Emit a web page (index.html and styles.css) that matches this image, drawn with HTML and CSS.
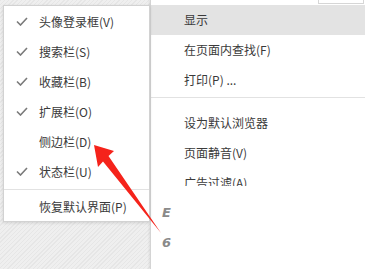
FILE: index.html
```html
<!DOCTYPE html>
<html>
	<head>
		<meta charset="UTF-8">
		<title></title>
		<link rel="stylesheet" href="styles.css">
	</head>
	<body>
		<div class="page">
			<div class="side">
				<ul class="submenu">
					<li class="on"><svg class="tick" viewBox="0 0 12 9"><polyline points="1,4.5 4.5,8 11,1"/></svg>头像登录框(V)</li>
					<li class="on"><svg class="tick" viewBox="0 0 12 9"><polyline points="1,4.5 4.5,8 11,1"/></svg>搜索栏(S)</li>
					<li class="on"><svg class="tick" viewBox="0 0 12 9"><polyline points="1,4.5 4.5,8 11,1"/></svg>收藏栏(B)</li>
					<li class="on"><svg class="tick" viewBox="0 0 12 9"><polyline points="1,4.5 4.5,8 11,1"/></svg>扩展栏(O)</li>
					<li><span class="blank"></span>侧边栏(D)</li>
					<li class="on"><svg class="tick" viewBox="0 0 12 9"><polyline points="1,4.5 4.5,8 11,1"/></svg>状态栏(U)</li>
					<li class="sep"></li>
					<li><span class="blank"></span>恢复默认界面(P)</li>
				</ul>
			</div>
			<div class="main">
				<div class="topbox"></div>
				<ul class="menu">
					<li class="hover">显示</li>
					<li>在页面内查找(F)</li>
					<li>打印(P) ...</li>
					<li class="sep"></li>
					<li>设为默认浏览器</li>
					<li>页面静音(V)</li>
					<li>广告过滤(A)</li>
				</ul>
				<div class="peek">
					<span>E</span>
					<span>6</span>
				</div>
			</div>
		</div>
		<!-- 标注箭头 -->
		<svg class="arrow" width="365" height="269" viewBox="0 0 365 269">
			<polygon points="94,145 114,151 108.5,156 161,233 103,161.5 98,167"/>
		</svg>
	</body>
</html>
```
FILE: styles.css
```css
body{
	margin: 0;
	font-family: "Microsoft YaHei", "Noto Sans CJK SC", sans-serif;
	font-size: 12px;
	color: #3a3a3a;
}
.page{
	display: flex;
	width: 365px;
	height: 269px;
	overflow: hidden;
	background-color: #ebebeb;
	background-image: repeating-linear-gradient(135deg, #e6e6e6 0px, #e6e6e6 1px, #efefef 1px, #efefef 3px);
}
.side{
	width: 150px;
	padding: 5px 0 0 3px;
	box-sizing: border-box;
	position: relative;
	z-index: 2;
}
.submenu{
	margin: 0;
	padding: 0;
	list-style: none;
	background: #fff;
	border: 1px solid #d2d2d2;
	box-shadow: 0 1px 3px rgba(0,0,0,0.12);
}
.submenu li{
	display: flex;
	align-items: center;
	height: 30px;
	padding-left: 12px;
	white-space: nowrap;
}
.submenu li.sep{
	height: 1px;
	padding: 0;
	margin: 3px 0 1px;
	background: #e2e2e2;
}
.tick{
	width: 12px;
	height: 9px;
	margin-right: 11px;
	fill: none;
	stroke: #7a7a7a;
	stroke-width: 1.6;
}
.blank{
	width: 12px;
	margin-right: 11px;
}
.main{
	flex: 1;
	background: #fff;
	border-left: 1px solid #d4d4d4;
	box-shadow: -1px 0 2px rgba(0,0,0,0.08);
	position: relative;
}
.topbox{
	position: absolute;
	right: 1px;
	top: -10px;
	width: 44px;
	height: 12px;
	border: 1px solid #d6d6d6;
}
.menu{
	margin: 5px 0 0;
	padding: 0;
	list-style: none;
	height: 181px;
	overflow: hidden;
}
.menu li{
	height: 30px;
	line-height: 30px;
	padding-left: 33px;
	white-space: nowrap;
}
.menu li.hover{
	background: #e3e3e3;
}
.menu li.sep{
	height: 1px;
	padding: 0;
	margin: 2px 0 10px;
	background: #e2e2e2;
}
.peek{
	width: 17px;
	overflow: hidden;
	padding: 19px 0 0 11px;
	color: #8a8a8a;
	font-family: "DejaVu Sans", sans-serif;
	font-style: italic;
	font-weight: bold;
	font-size: 13px;
}
.peek span{
	display: block;
	height: 30px;
	line-height: 16px;
}
.arrow{
	position: absolute;
	left: 0;
	top: 0;
	z-index: 5;
}
.arrow polygon{
	fill: #f5231b;
}
```
